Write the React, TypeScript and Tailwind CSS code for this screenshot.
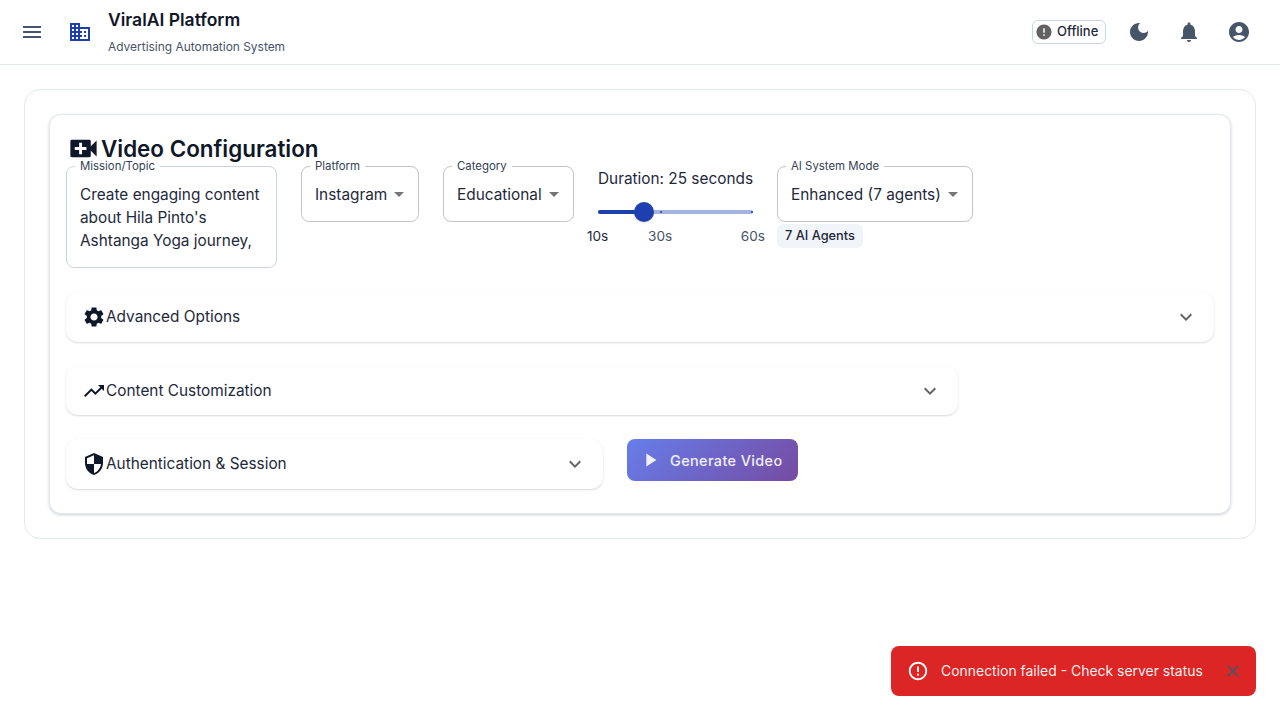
const PATHS = {
  menu: 'M3 18h18v-2H3v2zm0-5h18v-2H3v2zm0-7v2h18V6H3z',
  business:
    'M12 7V3H2v18h20V7H12zM6 19H4v-2h2v2zm0-4H4v-2h2v2zm0-4H4V9h2v2zm0-4H4V5h2v2zm4 12H8v-2h2v2zm0-4H8v-2h2v2zm0-4H8V9h2v2zm0-4H8V5h2v2zm10 12h-8v-2h2v-2h-2v-2h2v-2h-2V9h8v10zm-2-8h-2v2h2v-2zm0 4h-2v2h2v-2z',
  moon: 'M12 3c-4.97 0-9 4.03-9 9s4.03 9 9 9 9-4.03 9-9c0-.46-.04-.92-.1-1.36-.98 1.37-2.58 2.26-4.4 2.26-2.98 0-5.4-2.42-5.4-5.4 0-1.81.89-3.42 2.26-4.4-.44-.06-.9-.1-1.36-.1z',
  bell: 'M12 22c1.1 0 2-.9 2-2h-4c0 1.1.89 2 2 2zm6-6v-5c0-3.07-1.64-5.64-4.5-6.32V4c0-.83-.67-1.5-1.5-1.5s-1.5.67-1.5 1.5v.68C7.63 5.36 6 7.92 6 11v5l-2 2v1h16v-1l-2-2z',
  account:
    'M12 2C6.48 2 2 6.48 2 12s4.48 10 10 10 10-4.48 10-10S17.52 2 12 2zm0 4c1.93 0 3.5 1.57 3.5 3.5S13.93 13 12 13s-3.5-1.57-3.5-3.5S10.07 6 12 6zm0 14c-2.03 0-4.43-.82-6.14-2.88C7.55 15.8 9.68 15 12 15s4.45.8 6.14 2.12C16.43 19.18 14.03 20 12 20z',
  error: 'M12 2C6.48 2 2 6.48 2 12s4.48 10 10 10 10-4.48 10-10S17.52 2 12 2zm1 15h-2v-2h2v2zm0-4h-2V7h2v6z',
  videoCall:
    'M17 10.5V7c0-.55-.45-1-1-1H4c-.55 0-1 .45-1 1v10c0 .55.45 1 1 1h12c.55 0 1-.45 1-1v-3.5l4 4v-11l-4 4zM14 13h-3v3H9v-3H6v-2h3V8h2v3h3v2z',
  settings:
    'M19.14 12.94c.04-.3.06-.61.06-.94 0-.32-.02-.64-.07-.94l2.03-1.58c.18-.14.23-.41.12-.61l-1.92-3.32c-.12-.22-.37-.29-.59-.22l-2.39.96c-.5-.38-1.03-.7-1.62-.94l-.36-2.54c-.04-.24-.24-.41-.48-.41h-3.84c-.24 0-.43.17-.47.41l-.36 2.54c-.59.24-1.13.57-1.62.94l-2.39-.96c-.22-.08-.47 0-.59.22L2.74 8.87c-.12.21-.08.47.12.61l2.03 1.58c-.05.3-.09.63-.09.94s.02.64.07.94l-2.03 1.58c-.18.14-.23.41-.12.61l1.92 3.32c.12.22.37.29.59.22l2.39-.96c.5.38 1.03.7 1.62.94l.36 2.54c.05.24.24.41.48.41h3.84c.24 0 .44-.17.47-.41l.36-2.54c.59-.24 1.13-.56 1.62-.94l2.39.96c.22.08.47 0 .59-.22l1.92-3.32c.12-.22.07-.47-.12-.61l-2.01-1.58zM12 15.6c-1.98 0-3.6-1.62-3.6-3.6s1.62-3.6 3.6-3.6 3.6 1.62 3.6 3.6-1.62 3.6-3.6 3.6z',
  trending: 'M16 6l2.29 2.29-4.88 4.88-4-4L2 16.59 3.41 18l6-6 4 4 6.3-6.29L22 12V6z',
  security: 'M12 1L3 5v6c0 5.55 3.84 10.74 9 12 5.16-1.26 9-6.45 9-12V5l-9-4zm0 10.99h7c-.53 4.12-3.28 7.79-7 8.94V12H5V6.3l7-3.11v8.8z',
  expand: 'M16.59 8.59L12 13.17 7.41 8.59 6 10l6 6 6-6z',
  play: 'M8 5v14l11-7z',
  errorOutline:
    'M11 15h2v2h-2zm0-8h2v6h-2zm.99-5C6.47 2 2 6.48 2 12s4.47 10 9.99 10C17.52 22 22 17.52 22 12S17.52 2 11.99 2zM12 20c-4.42 0-8-3.58-8-8s3.58-8 8-8 8 3.58 8 8-3.58 8-8 8z',
  close: 'M19 6.41L17.59 5 12 10.59 6.41 5 5 6.41 10.59 12 5 17.59 6.41 19 12 13.41 17.59 19 19 17.59 13.41 12z',
};

function Icon({ d, className }: { d: string; className: string }) {
  return (
    <svg viewBox="0 0 24 24" fill="currentColor" className={`shrink-0 ${className}`}>
      <path d={d} />
    </svg>
  );
}

function FieldLabel({ text }: { text: string }) {
  return (
    <span className="absolute left-[8px] top-[-8px] bg-white px-[5px] text-[11.4px] leading-[14px] text-[#334155]">
      {text}
    </span>
  );
}

function SelectField({ label, value, width }: { label: string; value: string; width: string }) {
  return (
    <div className={`relative flex h-14 items-center rounded-lg border border-[#c4c4c4] pl-[13px] pt-[2px] ${width}`}>
      <FieldLabel text={label} />
      <span className="text-[15.36px] text-[#1e293b]">{value}</span>
      <svg viewBox="0 0 24 24" fill="currentColor" className="absolute right-[7px] top-[15px] h-6 w-6 text-[#757575]">
        <path d="M7 10l5 5 5-5z" />
      </svg>
    </div>
  );
}

function Accordion({ icon, title, className }: { icon: string; title: string; className: string }) {
  return (
    <div
      className={`flex items-start justify-between rounded-xl bg-white px-4 pt-[13px] shadow-[0_1px_2px_rgba(15,23,42,0.16),0_0_1px_rgba(15,23,42,0.06)] ${className}`}
    >
      <div className="flex items-center text-[15.36px] leading-6 text-[#1e293b]">
        <Icon d={icon} className="h-6 w-6 text-[#0f172a]" />
        {title}
      </div>
      <Icon d={PATHS.expand} className="h-6 w-6 text-[#666666]" />
    </div>
  );
}

function Header() {
  return (
    <header className="flex h-[65px] items-center border-b border-[#e2e8f0] bg-white pl-5 pr-[29px]">
      <Icon d={PATHS.menu} className="h-6 w-6 text-[#475569]" />
      <Icon d={PATHS.business} className="ml-6 h-6 w-6 text-[#1e40af]" />
      <div className="ml-4 flex h-full flex-col">
        <span className="mt-[6px] text-[17.5px] leading-[27px] font-semibold text-[#0f172a]">ViralAI Platform</span>
        <span className="mt-[5px] text-[11.95px] leading-[18px] text-[#475569]">Advertising Automation System</span>
      </div>
      <div className="ml-auto flex items-center">
        <div className="flex h-6 w-[74px] items-center rounded-md border border-[#cbd5e1] pl-[2px]">
          <Icon d={PATHS.error} className="h-[18px] w-[18px] text-[#616161]" />
          <span className="ml-[4px] text-[13px] font-medium text-[#1e293b]">Offline</span>
        </div>
        <Icon d={PATHS.moon} className="ml-[21px] h-6 w-6 text-[#475569]" />
        <Icon d={PATHS.bell} className="ml-[26px] h-6 w-6 text-[#475569]" />
        <Icon d={PATHS.account} className="ml-[26px] h-6 w-6 text-[#475569]" />
      </div>
    </header>
  );
}

function DurationSlider() {
  return (
    <div className="w-[155px]">
      <p className="whitespace-nowrap pt-[1px] text-[15.36px] leading-6 text-[#1e293b]">Duration: 25 seconds</p>
      <div className="relative mt-[19px] h-1 rounded-full bg-[#1e40af]/40">
        <div className="absolute left-0 top-0 h-1 w-[30%] rounded-full bg-[#1e40af]" />
        <span className="absolute left-[40%] top-[1px] h-[2px] w-[2px] rounded-full bg-[#1e40af]" />
        <span className="absolute right-0 top-[1px] h-[2px] w-[2px] rounded-full bg-[#1e40af]" />
        <span className="absolute left-[36px] top-[-8px] h-5 w-5 rounded-full bg-[#1e40af] shadow-sm" />
        <span className="absolute left-[-11px] top-[16px] text-[13.6px] leading-5 text-[#1e293b]">10s</span>
        <span className="absolute left-[50px] top-[16px] text-[13.6px] leading-5 text-[#475569]">30s</span>
        <span className="absolute right-[-12px] top-[16px] text-[13.6px] leading-5 text-[#475569]">60s</span>
      </div>
    </div>
  );
}

function ConfigCard() {
  return (
    <section className="rounded-xl border border-[#e2e8f0] bg-white px-4 pb-6 pt-4 shadow-[0_1px_3px_rgba(15,23,42,0.2)]">
      <h2 className="flex h-[35px] items-center text-[22.4px] font-semibold text-[#0f172a]">
        <Icon d={PATHS.videoCall} className="h-[35px] w-[35px] text-[#0f172a]" />
        Video Configuration
      </h2>

      <div className="flex items-start gap-6">
        <div className="relative h-[102px] w-[211px] rounded-lg border border-[#cbd5e1] pl-[13px] pt-[16px] text-[15.36px] leading-[23px] text-[#1e293b]">
          <FieldLabel text="Mission/Topic" />
          Create engaging content
          <br />
          about Hila Pinto's
          <br />
          Ashtanga Yoga journey,
        </div>
        <SelectField label="Platform" value="Instagram" width="w-[118px]" />
        <SelectField label="Category" value="Educational" width="w-[131px]" />
        <DurationSlider />
        <div className="w-[196px]">
          <SelectField label="AI System Mode" value="Enhanced (7 agents)" width="w-[196px]" />
          <span className="mt-[2px] inline-block h-6 rounded-md bg-[#f1f5f9] px-2 text-[12.8px] font-medium leading-6 text-[#1e293b]">
            7 AI Agents
          </span>
        </div>
      </div>

      <div className="mt-6 flex flex-col gap-6">
        <Accordion icon={PATHS.settings} title="Advanced Options" className="h-[50px] w-[1148px]" />
        <Accordion icon={PATHS.trending} title="Content Customization" className="h-[49px] w-[892px]" />
        <div className="flex items-start gap-6">
          <Accordion icon={PATHS.security} title="Authentication & Session" className="h-[50px] w-[537px]" />
          <button className="flex h-[42px] w-[171px] items-center rounded-lg bg-[linear-gradient(135deg,#667eea,#764ba2)] pl-3 text-[14.4px] font-medium tracking-[0.4px] text-white/90">
            <Icon d={PATHS.play} className="h-[22px] w-[22px] text-white/90" />
            <span className="ml-[9px] mt-[1px]">Generate Video</span>
          </button>
        </div>
      </div>
    </section>
  );
}

function Toast() {
  return (
    <div className="fixed bottom-6 right-6 flex h-[50px] w-[365px] items-center rounded-lg bg-[#dc2626] pl-4 text-[13.95px] text-white/95">
      <Icon d={PATHS.errorOutline} className="h-[22px] w-[22px] text-white" />
      <span className="ml-[12px]">Connection failed - Check server status</span>
      <Icon d={PATHS.close} className="absolute right-[13px] top-[15px] h-5 w-5 text-[#475569]" />
    </div>
  );
}

export default function App() {
  return (
    <div className="min-h-screen bg-white font-['Inter',sans-serif]">
      <Header />
      <main className="p-6">
        <div className="rounded-2xl border border-[#e2e8f0] bg-white p-6">
          <ConfigCard />
        </div>
      </main>
      <Toast />
    </div>
  );
}
